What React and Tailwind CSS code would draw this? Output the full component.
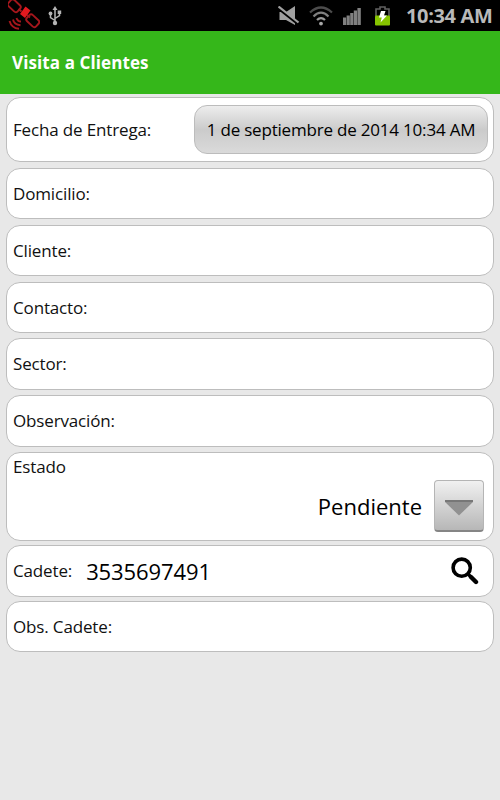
import { clsx } from "clsx";

// --- STATUS BAR ICONS ---
function SatelliteIcon() {
  return (
    <svg width="32" height="31" viewBox="0 0 32 31" fill="none" stroke="#a5161c" strokeWidth="1.9">
      <rect x="0" y="1.500" width="12.500" height="8.500" rx="2.500" transform="rotate(43 6.250 5.750)" />
      <rect x="18.500" y="16.500" width="12.500" height="8.500" rx="2.500" transform="rotate(43 24.750 20.750)" />
      <path d="M10.500 9l3 2.500M19 15l3 2.500" />
      <path d="M12 14l5.500-7.500 5 4-5.500 7.500z" fill="#e3191f" stroke="none" />
      <path d="M8.500 18q1 3.500 4.500 3.500M5 19.500q1 5 7.500 5.700M1.500 21q2 7 9.500 7.800" />
    </svg>
  );
}

function UsbIcon() {
  return (
    <svg width="14" height="20" viewBox="0 0 14 20" fill="none" stroke="#b5b5b5" strokeWidth="1.5">
      <path d="M7 3v13M7 14.500L2.500 11.500V8M7 12.500l4.500-3V6" />
      <path d="M7 0l2.500 4h-5z" fill="#b5b5b5" stroke="none" />
      <circle cx="7" cy="17" r="2.200" fill="#b5b5b5" stroke="none" />
      <circle cx="2.500" cy="7.500" r="1.900" fill="#b5b5b5" stroke="none" />
      <rect x="9.700" y="4.500" width="3.500" height="3.500" fill="#b5b5b5" stroke="none" />
    </svg>
  );
}

function MutedIcon() {
  return (
    <svg width="22" height="20" viewBox="0 0 22 20">
      <path d="M1.500 6H8l9-6v19l-9-5H1.500z" fill="#a0a0a0" />
      <path d="M0 2l20 16" stroke="#000" strokeWidth="2.800" />
      <path d="M0.500 0.500l20 16" stroke="#a0a0a0" strokeWidth="2.200" />
    </svg>
  );
}

function WifiIcon() {
  return (
    <svg width="24" height="20" viewBox="0 0 24 20" fill="none" strokeWidth="2.200">
      <path d="M1 6.500Q12-3.500 23 6.500" stroke="#4c4c4c" />
      <path d="M4.500 10.500Q12 3 19.500 10.500" stroke="#808080" />
      <path d="M8 14Q12 10 16 14" stroke="#999" />
      <circle cx="12" cy="17.600" r="1.900" fill="#a8a8a8" />
    </svg>
  );
}

function SignalIcon() {
  return (
    <svg width="18" height="17" viewBox="0 0 18 17" fill="#808080">
      <rect x="0" y="9.500" width="3.200" height="7.500" />
      <rect x="3.600" y="7.500" width="3.200" height="9.500" />
      <rect x="7.200" y="5" width="3.200" height="12" />
      <rect x="10.800" y="2.500" width="3.200" height="14.500" />
      <rect x="14.400" y="0" width="3.400" height="17" />
    </svg>
  );
}

function BatteryIcon() {
  return (
    <svg width="15" height="20" viewBox="0 0 15 20">
      <path d="M1 10V3h4V1h5v2h4v7" fill="none" stroke="#606060" strokeWidth="1.600" />
      <rect x="0" y="9.500" width="15" height="10" rx="1" fill="#86c400" />
      <path d="M6 5h4.500L9 9.500h3L5.500 16.500l1.300-5H4z" fill="#fff" />
    </svg>
  );
}

function SearchIcon() {
  return (
    <svg width="28" height="28" viewBox="0 0 28 28" fill="none" stroke="#000">
      <circle cx="10.700" cy="10.700" r="8.600" strokeWidth="3.600" />
      <path d="M17 17l3 3" strokeWidth="3.400" />
      <path d="M20 20l5 5" strokeWidth="4.400" strokeLinecap="round" />
    </svg>
  );
}

function Card({ className, children }) {
  return (
    <div className={clsx("flex shrink-0 rounded-[14px] border border-[#bdbdbd] bg-white pl-[6px] text-[17px] leading-6 tracking-[-0.15px]", className)}>
      {children}
    </div>
  );
}

export default function App() {
  return (
    <div className="flex h-[800px] w-[500px] flex-col overflow-hidden bg-[#e8e8e8] font-['Open_Sans','Noto_Sans',sans-serif] text-[#111]">
      {/* --- STATUS BAR --- */}
      <div className="flex h-[31px] shrink-0 items-center bg-black pr-[7px] pl-2">
        <SatelliteIcon />
        <div className="ml-2"><UsbIcon /></div>
        <div className="ml-auto flex items-center">
          <MutedIcon />
          <div className="ml-[9px]"><WifiIcon /></div>
          <div className="ml-[10px] pt-[2px]"><SignalIcon /></div>
          <div className="ml-[14px] pt-[1px]"><BatteryIcon /></div>
          <span className="ml-[16px] w-[87px] text-[20px] leading-6 font-bold tracking-[-0.35px] whitespace-nowrap text-[#b9b9b9]">10:34 AM</span>
        </div>
      </div>

      {/* --- TITLE --- */}
      <header className="flex h-[63px] shrink-0 items-center bg-[#35b71a] pl-3">
        <h1 className="text-[17px] font-bold tracking-[0.1px] text-white">Visita a Clientes</h1>
      </header>

      {/* --- FORM --- */}
      <main className="flex flex-col pt-[3px] pr-[6px] pl-[6px]">
        <Card className="mb-[6px] h-[65px] items-center justify-between pr-[5px]">
          <span>Fecha de Entrega:</span>
          <button className="h-[49px] w-[294px] rounded-[13px] border border-[#bcbcbc] bg-linear-to-b from-[#ededed] via-[#cbcbcb] to-[#dadada] text-[17px] tracking-[-0.2px] whitespace-nowrap text-black">
            1 de septiembre de 2014 10:34 AM
          </button>
        </Card>
        <Card className="mb-[6px] h-[51px] items-center">Domicilio:</Card>
        <Card className="mb-[6px] h-[51px] items-center">Cliente:</Card>
        <Card className="mb-[5px] h-[51px] items-center">Contacto:</Card>
        <Card className="mb-[5px] h-[52px] items-center">Sector:</Card>
        <Card className="mb-[5px] h-[52px] items-center">Observación:</Card>

        <Card className="mb-[4px] h-[89px] flex-col pt-[2px] pr-[9px]">
          <span>Estado</span>
          <div className="mt-px flex items-center justify-end">
            <span className="mr-[12px] text-[22px] tracking-normal text-black">Pendiente</span>
            <button className="flex h-[52px] w-[50px] items-center justify-center rounded-[4px] border border-b-2 border-[#b5b5b5] border-b-[#858585] bg-linear-to-b from-[#f1f1f1] to-[#b7b7b7]">
              <svg width="28" height="16" viewBox="0 0 28 16" className="mt-[5px]">
                <path d="M0 0h28v2L14 15.500 0 2z" fill="#919191" />
                <path d="M0 0h28v2H0z" fill="#777" />
              </svg>
            </button>
          </div>
        </Card>

        <Card className="mb-[4px] h-[52px] items-center pr-[14px]">
          <span>Cadete:</span>
          <span className="ml-[14px] text-[22px] tracking-[-0.1px] text-black">3535697491</span>
          <div className="ml-auto"><SearchIcon /></div>
        </Card>
        <Card className="h-[51px] items-center">Obs. Cadete:</Card>
      </main>
    </div>
  );
}
